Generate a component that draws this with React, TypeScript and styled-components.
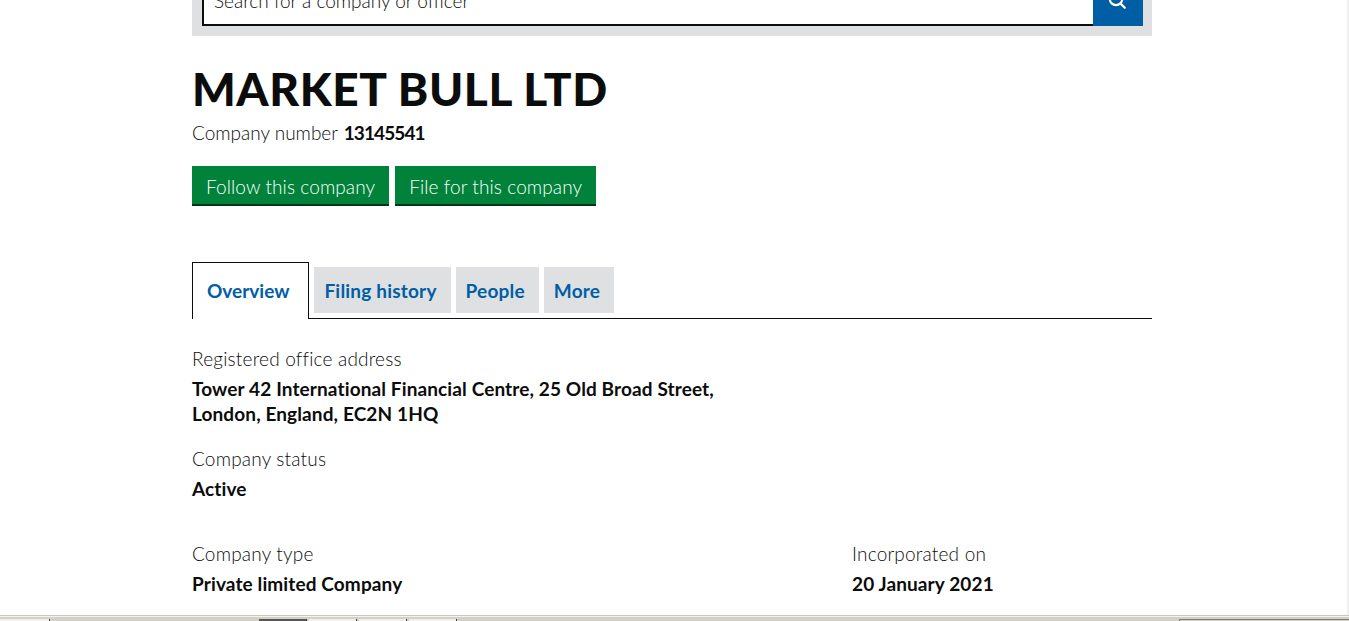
import React from "react"
import styled, { createGlobalStyle } from "styled-components"

const GlobalStyle = createGlobalStyle`
  html, body {
    margin: 0;
    padding: 0;
    background: #fff;
    overflow: hidden;
  }

  body {
    color: #0b0c0c;
    font-family: Lato, "Liberation Sans", sans-serif;
  }
`

const Search = () => (
  <SearchBand>
    <SearchInput>Search for a company or officer</SearchInput>
    <SearchButton aria-label="Search">
      <svg width="18" height="18" viewBox="0 0 18 18" fill="none" stroke="#fff" strokeWidth="2.2">
        <circle cx="8" cy="8" r="6.2" />
        <path d="M12.6 12.6 L16.8 16.8" strokeLinecap="round" />
      </svg>
    </SearchButton>
  </SearchBand>
)

export default function App() {
  return (
    <>
      <GlobalStyle />
      <Screen>
        <Window>
          <Page>
            <Search />
            <CompanyName>MARKET BULL LTD</CompanyName>
            <CompanyNumber>Company number <strong>13145541</strong></CompanyNumber>
            <Buttons>
              <GreenButton>Follow this company</GreenButton>
              <GreenButton>File for this company</GreenButton>
            </Buttons>
            <Tabs>
              <ActiveTab>Overview</ActiveTab>
              <Tab>Filing history</Tab>
              <Tab>People</Tab>
              <Tab>More</Tab>
            </Tabs>
            <Field>
              <Label>Registered office address</Label>
              <Value>
                Tower 42 International Financial Centre, 25 Old Broad Street,<br />
                London, England, EC2N 1HQ
              </Value>
            </Field>
            <Field>
              <Label>Company status</Label>
              <Value>Active</Value>
            </Field>
            <Columns>
              <div>
                <Label>Company type</Label>
                <Value>Private limited Company</Value>
              </div>
              <div>
                <Label>Incorporated on</Label>
                <Value>20 January 2021</Value>
              </div>
            </Columns>
          </Page>
          <ScrollStrip />
        </Window>
        <Taskbar>
          <StartButton />
          <TaskButtons>
            <TaskButton $active />
            <TaskButton />
            <TaskButton />
            <TaskButton />
          </TaskButtons>
          <Tray />
        </Taskbar>
      </Screen>
    </>
  )
}

const Screen = styled.div`
  display: flex;
  flex-direction: column;
  height: 621px;
  overflow: hidden;
  width: 1349px;
`

const Window = styled.div`
  display: flex;
  flex: 1;
  min-height: 0;
`

const Page = styled.main`
  flex: 1;
  overflow: hidden;
  padding: 0 195px 0 192px;
`

const ScrollStrip = styled.div`
  background: #f0f0f0;
  width: 2px;
`

// the page is scrolled, so the top of this band is cut off by the window
const SearchBand = styled.div`
  align-items: flex-end;
  background: #dee0e2;
  box-sizing: border-box;
  display: flex;
  height: 36px;
  overflow: hidden;
  padding: 0 9px 10px 10px;
`

const SearchInput = styled.div`
  background: #fff;
  border-bottom: 2px solid #0b0c0c;
  border-left: 2px solid #0b0c0c;
  box-sizing: border-box;
  flex: 1;
  font-size: 19px;
  font-weight: 300;
  height: 48px;
  line-height: 46px;
  padding: 0 10px;
`

const SearchButton = styled.div`
  align-items: flex-end;
  background: #005ea5;
  box-sizing: border-box;
  display: flex;
  height: 48px;
  justify-content: center;
  padding: 0 3px 17px 0;
  width: 50px;
`

const CompanyName = styled.h1`
  font-size: 46px;
  font-weight: 900;
  letter-spacing: 0.6px;
  line-height: 54px;
  margin: 26px 0 0;
`

const CompanyNumber = styled.p`
  font-size: 19px;
  font-weight: 300;
  line-height: 25px;
  margin: 4px 0 0;

  strong {
    font-weight: 700;
    letter-spacing: -0.9px;
    margin-left: 1px;
  }
`

const Buttons = styled.div`
  display: flex;
  gap: 6px;
  margin-top: 21px;
`

const GreenButton = styled.div`
  background: #00823b;
  box-shadow: 0 2px 0 #003618;
  color: #fff;
  font-size: 19px;
  font-weight: 300;
  height: 38px;
  letter-spacing: 0.1px;
  line-height: 42px;
  padding: 0 14px;
`

const Tabs = styled.nav`
  align-items: flex-end;
  border-bottom: 1px solid #0b0c0c;
  display: flex;
  gap: 5px;
  height: 56px;
  margin-top: 58px;
`

const Tab = styled.div`
  background: #dee0e2;
  color: #005ea5;
  font-size: 19px;
  font-weight: 700;
  height: 46px;
  letter-spacing: 0.2px;
  line-height: 48px;
  margin-bottom: 5px;
  padding: 0 14px 0 10px;
`

const ActiveTab = styled.div`
  background: #fff;
  border: 1px solid #0b0c0c;
  border-bottom: 0;
  color: #005ea5;
  font-size: 19px;
  font-weight: 700;
  height: 56px;
  line-height: 56px;
  margin-bottom: -1px;
  padding: 0 19px 0 14px;
`

const Field = styled.section`
  margin-bottom: 20px;

  ${Tabs} + & {
    margin-top: 27px;
  }
`

const Label = styled.div`
  font-size: 19px;
  font-weight: 300;
  letter-spacing: 0.2px;
  line-height: 25px;
  margin-bottom: 5px;
`

const Value = styled.div`
  font-size: 19px;
  font-weight: 700;
  letter-spacing: 0.12px;
  line-height: 25px;
`

const Columns = styled.div`
  display: grid;
  grid-template-columns: 660px 1fr;
  margin-top: 40px;
`

const Taskbar = styled.footer`
  background: #d4d0c8;
  border-top: 1px solid #c8c8c0;
  box-shadow: inset 0 1px 0 #f4f2ec;
  box-sizing: border-box;
  display: flex;
  height: 6px;
  overflow: hidden;
  padding-top: 3px;
`

const StartButton = styled.div`
  background: #f2f0ea;
  border-right: 1px solid #404040;
  height: 8px;
  width: 49px;
`

const TaskButtons = styled.div`
  display: flex;
  flex: 1;
  gap: 2px;
  padding-left: 209px;
`

const TaskButton = styled.div<{ readonly $active?: boolean }>`
  background: ${({ $active }) => ($active ? "#555" : "#f2f0ea")};
  border-right: 1px solid #404040;
  box-sizing: border-box;
  height: 8px;
  width: 48px;
`

const Tray = styled.div`
  border-left: 1px solid #807c74;
  border-top: 1px solid #807c74;
  height: 8px;
  width: 169px;
`
